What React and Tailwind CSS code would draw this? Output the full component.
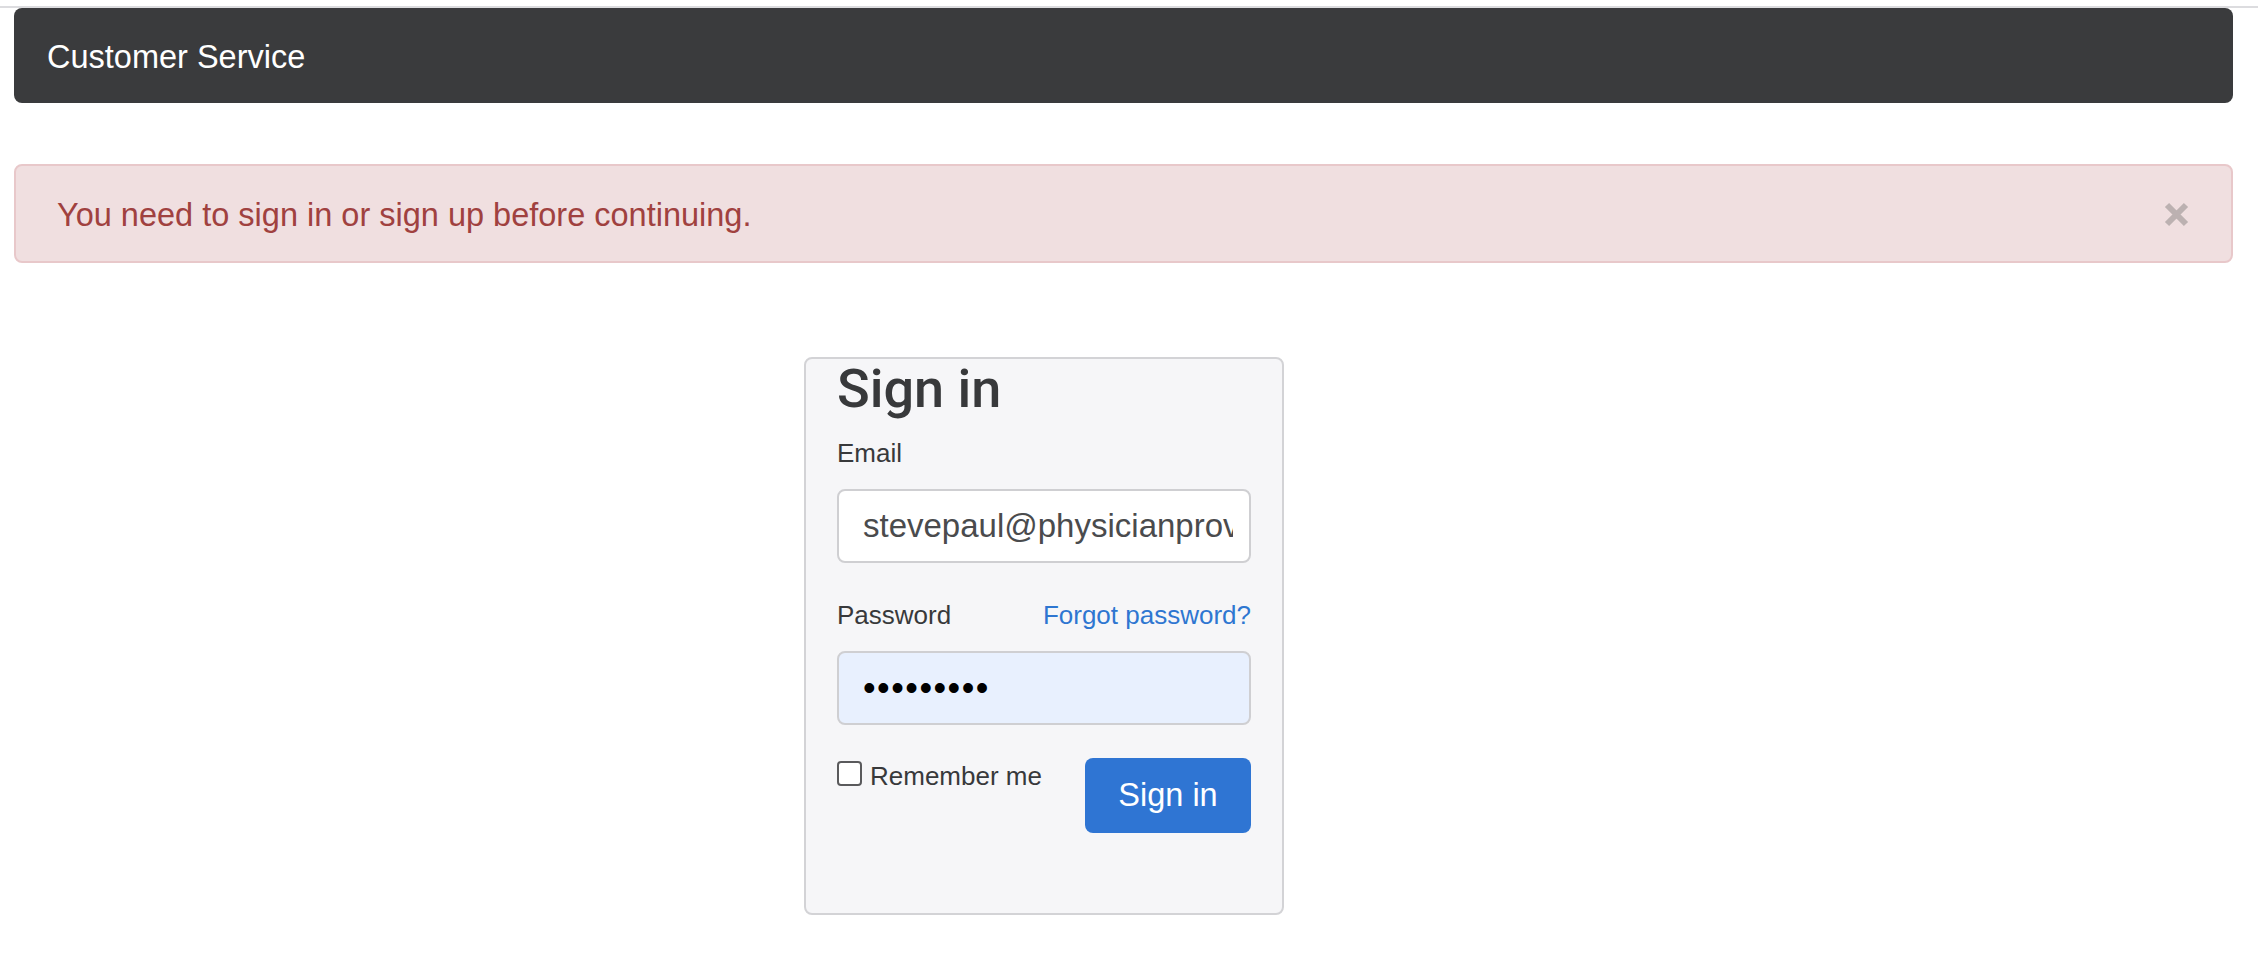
import { useState } from "react";

function CloseIcon() {
  return (
    <svg width="25" height="25" viewBox="0 0 25 25" className="block">
      <path d="M3 3 L22 22 M22 3 L3 22" stroke="#bcb1b1" strokeWidth="6" strokeLinecap="butt" />
    </svg>
  );
}

export default function App() {
  const [showAlert, setShowAlert] = useState(true);
  const [remember, setRemember] = useState(false);

  return (
    <div className="min-h-screen bg-white font-['Liberation_Sans',Arial,sans-serif]">
      {/* browser edge line */}
      <div className="h-[6px]" />
      <div className="h-[2px] bg-[#dcdcdf]" />

      {/* Navbar */}
      <nav className="ml-[14px] mr-[25px] h-[95px] rounded-[8px] bg-[#3a3b3d] flex items-center pl-[33px] pt-[2px]">
        <span className="text-[32.5px] leading-[40px] text-white">Customer Service</span>
      </nav>

      {/* Flash alert */}
      {showAlert && (
        <div className="ml-[14px] mr-[25px] mt-[61px] h-[99px] rounded-[8px] border-2 border-[#e8c8ca] bg-[#f0dfe0] flex items-center justify-between pl-[41px] pr-[42px] pt-[2px]">
          <span className="text-[32.5px] leading-[40px] text-[#a0413f]">
            You need to sign in or sign up before continuing.
          </span>
          <button onClick={() => setShowAlert(false)} className="p-0" aria-label="Close">
            <CloseIcon />
          </button>
        </div>
      )}

      {/* Sign in card */}
      <div className="ml-[804px] mt-[94px] w-[480px] rounded-[8px] border-2 border-[#d3d3d6] bg-[#f6f6f8] px-[31px] pb-[80px]">
        <h2 className="font-['Roboto',Arial,sans-serif] text-[54px] leading-[60px] font-medium text-[#38393b]">Sign in</h2>

        <label className="block mt-[16px] text-[26px] leading-[36px] text-[#38393b]">Email</label>
        <input
          type="email"
          readOnly
          value="stevepaul@physicianproviders.com"
          className="mt-[18px] block w-full h-[74px] rounded-[8px] border-2 border-[#cfcfd2] bg-white pl-[24px] pr-[16px] text-[33px] text-[#4a4b4d] outline-none"
        />

        <div className="mt-[34px] flex items-center justify-between text-[26px] leading-[36px]">
          <label className="text-[#38393b]">Password</label>
          <a href="#" className="text-[#2e76d1]">Forgot password?</a>
        </div>
        <input
          type="password"
          readOnly
          value="123456789"
          className="mt-[18px] block w-full h-[74px] rounded-[8px] border-2 border-[#cfcfd2] bg-[#e8f0fe] pl-[24px] pr-[16px] text-[36px] tracking-[1.5px] text-black outline-none"
        />

        <div className="mt-[33px] flex items-start justify-between">
          <label className="flex items-start gap-[8px] text-[26px] leading-[36px] text-[#38393b]">
            <input
              type="checkbox"
              checked={remember}
              onChange={(e) => setRemember(e.target.checked)}
              className="mt-[3px] w-[25px] h-[25px] appearance-none rounded-[4px] border-2 border-[#5a5a5c] bg-white checked:bg-[#2f75d3]"
            />
            Remember me
          </label>
          <button className="w-[166px] h-[75px] rounded-[8px] bg-[#2f75d3] text-[32.5px] text-white">
            Sign in
          </button>
        </div>
      </div>
    </div>
  );
}
